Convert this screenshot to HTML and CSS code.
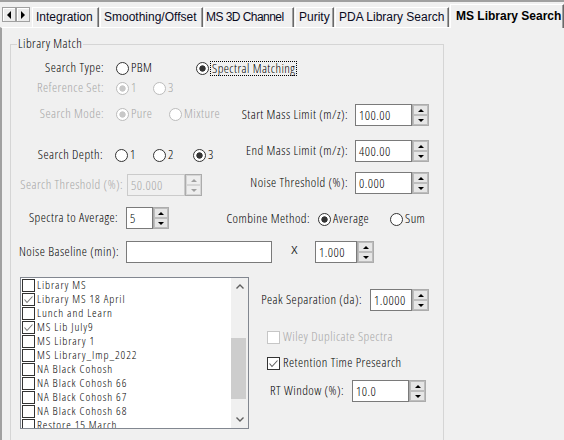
FILE: index.html
```html
<!DOCTYPE html>
<html>
<head>
<meta charset="utf-8">
<link rel="stylesheet" href="styles.css">
</head>
<body>
<div class="topline"></div>
<div class="tabbar">
  <div class="scroller"><span class="sbtn"><i class="tri-l"></i></span><span class="sbtn"><i class="tri-r"></i></span></div>
  <div class="tab t1">Integration</div>
  <div class="tab t2">Smoothing/Offset</div>
  <div class="tab t3">MS 3D Channel</div>
  <div class="tab t4">Purity</div>
  <div class="tab t5">PDA Library Search</div>
  <div class="tab sel">MS Library Search</div>
</div>
<div class="panel">
  <div class="group">
    <div class="legend">Library Match</div>
    <div class="top">
      <div class="colL">
        <div class="row r16 st">
          <span class="lab la">Search Type:</span>
          <span class="opt o80"><span class="radio"></span><span class="tx">PBM</span></span>
          <span class="opt"><span class="radio on tight"></span><span class="focus">Spectral Matching</span></span>
        </div>
        <div class="row r16 rs dis">
          <span class="lab la">Reference Set:</span>
          <span class="opt o37"><span class="radio ondis"></span><span class="tx">1</span></span>
          <span class="opt"><span class="radio offdis"></span><span class="tx">3</span></span>
        </div>
        <div class="row r16 sm dis">
          <span class="lab la">Search Mode:</span>
          <span class="opt o53"><span class="radio ondis"></span><span class="tx">Pure</span></span>
          <span class="opt"><span class="radio offdis"></span><span class="tx">Mixture</span></span>
        </div>
        <div class="row r16 sd">
          <span class="lab lsd">Search Depth:</span>
          <span class="opt o38"><span class="radio"></span><span class="tx">1</span></span>
          <span class="opt o40"><span class="radio"></span><span class="tx">2</span></span>
          <span class="opt"><span class="radio on"></span><span class="tx">3</span></span>
        </div>
        <div class="row r22 sth">
          <span class="lab lth dis">Search Threshold (%):</span>
          <span class="in w58 indis">50.000</span>
          <span class="spin spdis"><span class="sb up"></span><span class="sb dn"></span></span>
        </div>
        <div class="row r22 sa">
          <span class="lab lsa">Spectra to Average:</span>
          <span class="in w27">5</span>
          <span class="spin sp16"><span class="sb up"></span><span class="sb dn"></span></span>
        </div>
      </div>
      <div class="colR">
        <div class="row r22 smass">
          <span class="lab lr">Start Mass Limit (m/z):</span>
          <span class="in w57">100.00</span>
          <span class="spin"><span class="sb up"></span><span class="sb dn"></span></span>
        </div>
        <div class="row r22 emass">
          <span class="lab lr">End Mass Limit (m/z):</span>
          <span class="in w57">400.00</span>
          <span class="spin"><span class="sb up"></span><span class="sb dn"></span></span>
        </div>
        <div class="row r22 nth">
          <span class="lab lr">Noise Threshold (%):</span>
          <span class="in w57">0.000</span>
          <span class="spin"><span class="sb up"></span><span class="sb dn"></span></span>
        </div>
        <div class="row r16 comb">
          <span class="lab lcomb">Combine Method:</span>
          <span class="opt o72"><span class="radio on"></span><span class="tx">Average</span></span>
          <span class="opt"><span class="radio"></span><span class="tx">Sum</span></span>
        </div>
      </div>
    </div>
    <div class="row r22 nb">
      <span class="lab lnb">Noise Baseline (min):</span>
      <span class="in w146"></span>
      <span class="times">X</span>
      <span class="in w42">1.000</span>
      <span class="spin"><span class="sb up"></span><span class="sb dn"></span></span>
    </div>
    <div class="bottom">
      <div class="list">
        <div class="items">
          <div class="item"><span class="cb"></span>Library MS</div>
          <div class="item"><span class="cb"><svg viewBox="0 0 11 11"><path d="M1.5 5.5 L4 8.5 L9.5 2.5"/></svg></span>Library MS 18 April</div>
          <div class="item"><span class="cb"></span>Lunch and Learn</div>
          <div class="item"><span class="cb"><svg viewBox="0 0 11 11"><path d="M1.5 5.5 L4 8.5 L9.5 2.5"/></svg></span>MS Lib July9</div>
          <div class="item"><span class="cb"></span>MS Library 1</div>
          <div class="item"><span class="cb"></span>MS Library_Imp_2022</div>
          <div class="item"><span class="cb"></span>NA Black Cohosh</div>
          <div class="item"><span class="cb"></span>NA Black Cohosh 66</div>
          <div class="item"><span class="cb"></span>NA Black Cohosh 67</div>
          <div class="item"><span class="cb"></span>NA Black Cohosh 68</div>
          <div class="item"><span class="cb"></span>Restore 15 March</div>
        </div>
        <div class="sbar">
          <span class="sarr"><svg width="8" height="5" viewBox="0 0 8 5"><path d="M0.5 4.5 L4 1 L7.5 4.5"/></svg></span>
          <span class="sgap"></span>
          <span class="thumb"></span>
          <span class="sfill"></span>
          <span class="sarr"><svg width="8" height="5" viewBox="0 0 8 5"><path d="M0.5 0.5 L4 4 L7.5 0.5"/></svg></span>
        </div>
      </div>
      <div class="colB">
        <div class="row r22 peak">
          <span class="lab lpk">Peak Separation (da):</span>
          <span class="in w42">1.0000</span>
          <span class="spin"><span class="sb up"></span><span class="sb dn"></span></span>
        </div>
        <div class="row r16 wiley dis">
          <span class="cb cbdis"></span><span class="tx">Wiley Duplicate Spectra</span>
        </div>
        <div class="row r16 ret">
          <span class="cb"><svg viewBox="0 0 11 11"><path d="M1.5 5.5 L4 8.5 L9.5 2.5"/></svg></span><span class="tx">Retention Time Presearch</span>
        </div>
        <div class="row r22 rtw">
          <span class="lab lrt">RT Window (%):</span>
          <span class="in w57">10.0</span>
          <span class="spin"><span class="sb up"></span><span class="sb dn"></span></span>
        </div>
      </div>
    </div>
  </div>
</div>
</body>
</html>
```
FILE: styles.css
```css
* { box-sizing: border-box; }
html, body { margin: 0; padding: 0; }
body {
  width: 564px; height: 440px; overflow: hidden;
  background: #f0f0f0; color: #000;
  font-family: "Open Sans", "Liberation Sans", sans-serif;
  font-stretch: 75%; font-weight: 300;
  font-size: 13px; letter-spacing: 0.45px; line-height: 15px;
}
.topline { height: 2px; background: #a0a0a0; }

/* tab strip */
.tabbar {
  display: flex; align-items: flex-end; height: 25px; padding-left: 2px;
  font-family: "Liberation Sans", Arial, sans-serif; font-stretch: normal; font-weight: normal;
  font-size: 12px; letter-spacing: 0;
}
.scroller { align-self: flex-start; margin-top: 5px; margin-right: 2px; display: flex; }
.sbtn {
  width: 14px; height: 15px; border: 1px solid #a0a0a0; background: #ececec;
  box-shadow: inset 1px 1px #fff;
  display: flex; align-items: center; justify-content: center;
}
.tri-l, .tri-r { width: 0; height: 0; border-top: 4px solid transparent; border-bottom: 4px solid transparent; }
.tri-l { border-right: 4px solid #000; }
.tri-r { border-left: 4px solid #000; }
.tab {
  height: 20px; line-height: 18px; flex: none;
  border-top: 1px solid #fff; border-left: 1px solid #fff; border-right: 1px solid #696969;
  box-shadow: inset -1px 0 #a0a0a0;
  margin-right: 1px; padding-left: 3px;
  white-space: nowrap; overflow: hidden; background: #f0f0f0; color: #0a0a1e;
}
.t1 { width: 67px; }
.t2 { width: 103px; }
.t3 { width: 90px; padding-left: 1px; letter-spacing: -0.55px; }
.t4 { width: 39px; }
.t5 { width: 114px; }
.tab.sel {
  width: 114px; height: 24px; padding-top: 2px; padding-left: 5px;
  font-weight: bold; margin-right: 0; margin-bottom: -1px;
  position: relative; z-index: 1; color: #000;
}

/* panel & group */
.panel {
  border-top: 1px solid #fff; border-left: 2px solid #a0a0a0;
  height: 413px; padding: 16px 0 0 8px;
}
.group { width: 434px; height: 420px; border: 1px solid #d5d5d5; }
.legend {
  width: max-content; margin: -8px 0 0 6px; padding: 0 1px;
  background: #f0f0f0; line-height: 13px;
}
.top { display: flex; align-items: flex-start; }
.colL { width: 214px; flex: none; }
.colR { flex: 1; }

.row { display: flex; align-items: center; white-space: nowrap; }
.r16 { height: 16px; }
.r22 { height: 22px; }
.lab, .tx { flex: none; line-height: 14px; padding-bottom: 2px; }
.lab { text-align: right; }
.dis { color: #a6a6a6; }

/* vertical rhythm */
.st { margin-top: 10px; }
.rs { margin-top: 4px; }
.sm { margin-top: 10px; }
.sd { margin-top: 25px; }
.sth { margin-top: 11px; }
.sa { margin-top: 11px; }
.smass { margin-top: 54px; }
.emass { margin-top: 14px; }
.nth { margin-top: 10px; }
.comb { margin-top: 17px; }
.nb { margin-top: 12px; }
.bottom { display: flex; align-items: flex-start; margin-top: 14px; }
.peak { margin-top: 12px; }
.wiley { margin-top: 18px; padding-left: 18px; }
.ret { margin-top: 10px; padding-left: 18px; }
.rtw { margin-top: 9px; }

/* label widths */
.la { width: 93px; margin-right: 12px; }
.lsd { width: 92px; margin-right: 12px; }
.lth { width: 112px; margin-right: 4px; }
.lsa { width: 107px; margin-right: 8px; }
.lr { width: 123px; margin-right: 7px; }
.lcomb { width: 85px; margin-right: 8px; }
.lnb { width: 108px; margin-right: 7px; }
.lpk { width: 113px; margin-right: 8px; }
.lrt { width: 95px; margin-right: 8px; }

/* radio options */
.opt { display: flex; align-items: center; flex: none; }
.o80 { width: 80px; }
.o37 { width: 37px; }
.o53 { width: 53px; }
.o38 { width: 38px; }
.o40 { width: 40px; }
.o72 { width: 72px; }
.radio {
  width: 13px; height: 13px; flex: none; margin-right: 2px;
  border: 1px solid #333; border-radius: 50%; background: #fff;
}
.radio.tight { margin-right: 1px; }
.radio.on { background: radial-gradient(circle, #333 0 2.8px, #fff 3.5px); }
.radio.offdis { border-color: #bcbcbc; }
.radio.ondis { border-color: #bcbcbc; background: radial-gradient(circle, #c8c8c8 0 2.8px, #fff 3.5px); }
.focus { border: 1px dotted #000; padding: 0 1px; line-height: 13px; }

/* edits & spinners */
.in {
  height: 22px; flex: none; border: 1px solid #7a7a7a; background: #fff;
  padding-left: 3px; line-height: 14px;
  display: flex; align-items: center; white-space: nowrap; overflow: hidden;
}
.in.indis { border-color: #cbcbcb; background: #f0f0f0; color: #a6a6a6; }
.w57 { width: 57px; }
.w58 { width: 58px; }
.w27 { width: 27px; }
.w146 { width: 146px; }
.w42 { width: 42px; }
.spin {
  width: 17px; height: 22px; flex: none; border: 1px solid #acacac; background: #fff;
  display: flex; flex-direction: column;
}
.spin.sp16 { width: 16px; }
.sb {
  flex: 1; border: 1px solid #bdbdbd; background: #e6e6e6;
  display: flex; align-items: center; justify-content: center;
}
.sb::before { content: ""; width: 0; height: 0; border-left: 3px solid transparent; border-right: 3px solid transparent; }
.up::before { border-bottom: 3px solid #000; }
.dn::before { border-top: 3px solid #000; }
.spdis .sb { border-color: #d6d6d6; background: #eeeeee; }
.spdis .up::before { border-bottom-color: #a0a0a0; }
.spdis .dn::before { border-top-color: #a0a0a0; }
.times {
  width: 43px; flex: none; padding-left: 19px; align-self: flex-start; margin-top: 5px;
  font-family: "Liberation Sans", sans-serif; font-stretch: normal; font-weight: normal; letter-spacing: 0;
  font-size: 10px; line-height: 10px; color: #222;
}

/* checkboxes */
.cb {
  width: 13px; height: 13px; flex: none; margin-right: 3px;
  border: 1px solid #333; background: #fff;
  display: flex; align-items: center; justify-content: center;
}
.cb svg { width: 11px; height: 11px; display: block; }
.cb path { fill: none; stroke: #5f5f5f; stroke-width: 1.1; }
.cb.cbdis { border-color: #c6c6c6; }

/* list box */
.list {
  margin-left: 9px; width: 229px; height: 152px; flex: none;
  border: 1px solid #828790; background: #fff; display: flex;
}
.items { flex: 1; overflow: hidden; font-size: 11.5px; letter-spacing: 0.9px; }
.item { height: 14px; line-height: 14px; display: flex; align-items: center; padding-left: 1px; white-space: nowrap; }
.item .cb { margin-right: 2px; }
.item .cb path { stroke: #7a7a7a; }
.sbar { width: 17px; flex: none; background: #f0f0f0; display: flex; flex-direction: column; }
.sarr { height: 17px; flex: none; display: flex; align-items: center; justify-content: center; }
.sarr path { fill: none; stroke: #606060; stroke-width: 1.4; }
.sgap { height: 43px; flex: none; }
.thumb { height: 61px; width: 15px; flex: none; background: #cdcdcd; }
.sfill { flex: 1; }
.colB { flex: 1; }
```
